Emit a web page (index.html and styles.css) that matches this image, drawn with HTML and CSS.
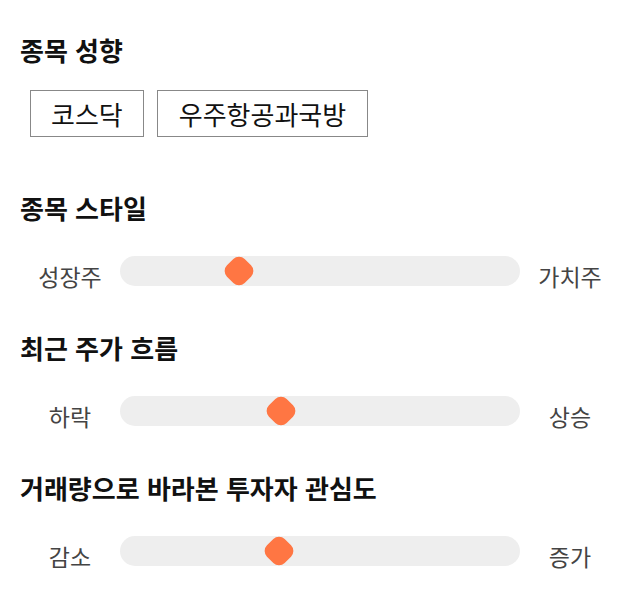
FILE: index.html
```html
<!DOCTYPE html>
<html lang="ko">
<head>
<meta charset="utf-8">
<link rel="stylesheet" href="styles.css">
</head>
<body>
<main class="page">
  <section class="section">
    <h2 class="title">종목 성향</h2>
    <div class="chips">
      <span class="chip">코스닥</span>
      <span class="chip">우주항공과국방</span>
    </div>
  </section>
  <section class="section">
    <h2 class="title">종목 스타일</h2>
    <div class="slider-row">
      <span class="label">성장주</span>
      <div class="track"><span class="thumb" style="left: 29.7%"></span></div>
      <span class="label">가치주</span>
    </div>
  </section>
  <section class="section">
    <h2 class="title">최근 주가 흐름</h2>
    <div class="slider-row">
      <span class="label">하락</span>
      <div class="track"><span class="thumb" style="left: 40.2%"></span></div>
      <span class="label">상승</span>
    </div>
  </section>
  <section class="section">
    <h2 class="title">거래량으로 바라본 투자자 관심도</h2>
    <div class="slider-row">
      <span class="label">감소</span>
      <div class="track"><span class="thumb" style="left: 39.7%"></span></div>
      <span class="label">증가</span>
    </div>
  </section>
</main>
</body>
</html>
```
FILE: styles.css
```css
* { box-sizing: border-box; }
html, body { margin: 0; padding: 0; background: #fff; }
body {
  font-family: "Noto Sans CJK KR", "Noto Sans", sans-serif;
  color: #111;
}
.page {
  padding: 35px 20px 40px 20px;
  display: flex;
  flex-direction: column;
}
.section { display: flex; flex-direction: column; }
.section + .section { margin-top: 47px; }
.section:nth-child(2) { margin-top: 56px; }
.title {
  margin: 0;
  font-size: 26px;
  line-height: 30px;
  height: 30px;
  font-weight: 700;
  color: #111;
}
.chips {
  margin-top: 25px;
  padding-left: 10px;
  display: flex;
  gap: 13px;
}
.chip {
  display: inline-block;
  height: 47px;
  line-height: 45px;
  padding: 0 20px;
  border: 1px solid #888;
  font-size: 26px;
  color: #111;
}
.chip + .chip { padding: 0 21px; }
.slider-row {
  margin-top: 33px;
  display: grid;
  grid-template-columns: 100px 1fr 100px;
  height: 30px;
}
.label {
  text-align: center;
  font-size: 23px;
  height: 30px;
  line-height: 40px;
  color: #444;
}
.track {
  position: relative;
  height: 30px;
  border-radius: 15px;
  background: #eeeeee;
}
.thumb {
  position: absolute;
  top: 50%;
  width: 25px;
  height: 25px;
  border-radius: 8px;
  background: #ff7643;
  transform: translate(-50%, -50%) rotate(45deg);
}
```
